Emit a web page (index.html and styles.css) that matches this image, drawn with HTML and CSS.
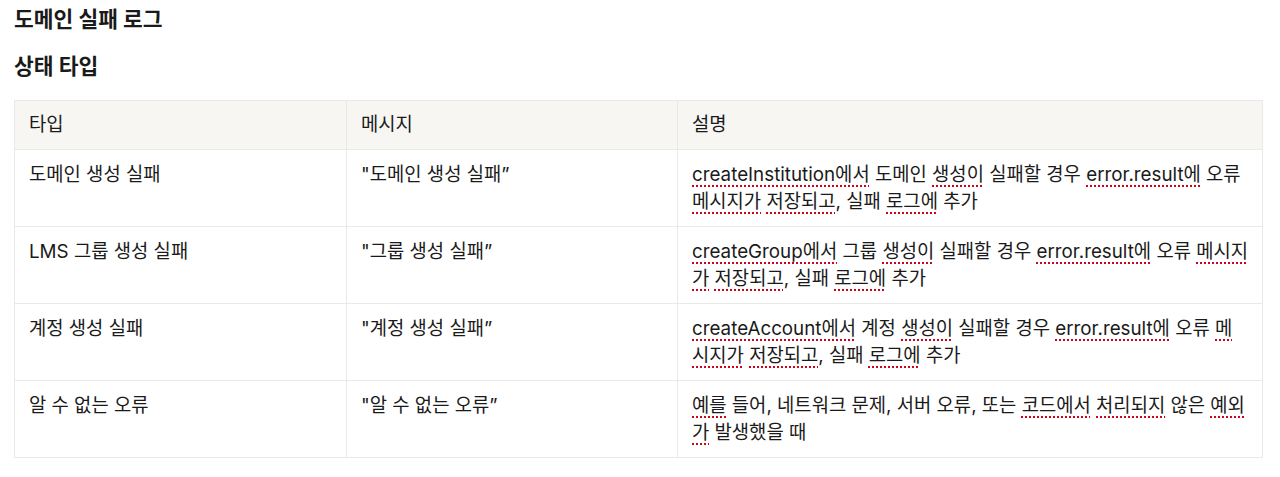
FILE: index.html
```html
<!DOCTYPE html>
<html lang="ko">
<head>
<meta charset="utf-8">
<title>도메인 실패 로그</title>
<link rel="stylesheet" href="styles.css">
</head>
<body>
<main class="page">
  <h1 class="title">도메인 실패 로그</h1>
  <h2 class="subtitle">상태 타입</h2>
  <table class="log-table">
    <colgroup>
      <col class="c-type">
      <col class="c-msg">
      <col class="c-desc">
    </colgroup>
    <thead>
      <tr><th>타입</th><th>메시지</th><th>설명</th></tr>
    </thead>
    <tbody>
      <tr>
        <td>도메인 생성 실패</td>
        <td>"도메인 생성 실패”</td>
        <td class="desc"><span class="sp">createInstitution에서</span> 도메인 <span class="sp">생성이</span> 실패할 경우 <span class="sp">error.result에</span> 오류 <span class="sp">메시지가</span> <span class="sp">저장되고</span>, 실패 <span class="sp">로그에</span> 추가</td>
      </tr>
      <tr>
        <td>LMS 그룹 생성 실패</td>
        <td>"그룹 생성 실패”</td>
        <td class="desc"><span class="sp">createGroup에서</span> 그룹 <span class="sp">생성이</span> 실패할 경우 <span class="sp">error.result에</span> 오류 <span class="sp">메시지가</span> <span class="sp">저장되고</span>, 실패 <span class="sp">로그에</span> 추가</td>
      </tr>
      <tr>
        <td>계정 생성 실패</td>
        <td>"계정 생성 실패”</td>
        <td class="desc"><span class="sp">createAccount에서</span> 계정 <span class="sp">생성이</span> 실패할 경우 <span class="sp">error.result에</span> 오류 <span class="sp">메시지가</span> <span class="sp">저장되고</span>, 실패 <span class="sp">로그에</span> 추가</td>
      </tr>
      <tr>
        <td>알 수 없는 오류</td>
        <td>"알 수 없는 오류”</td>
        <td class="desc"><span class="sp">예를</span> 들어, 네트워크 문제, 서버 오류, 또는 <span class="sp">코드에서</span> <span class="sp">처리되지</span> 않은 <span class="sp">예외가</span> 발생했을 때</td>
      </tr>
    </tbody>
  </table>
</main>
</body>
</html>
```

FILE: styles.css
```css
* { box-sizing: border-box; }

html, body {
  margin: 0;
  padding: 0;
  background: #ffffff;
}

body {
  font-family: Inter, "Noto Sans CJK KR", "Noto Sans", sans-serif;
  color: #1a1a1a;
}

.page {
  padding: 5px 14px 0 14px;
}

.title {
  margin: 0;
  font-size: 21.5px;
  line-height: 28px;
  font-weight: 700;
}

.subtitle {
  margin: 19px 0 20px 0;
  font-size: 21.5px;
  line-height: 28px;
  font-weight: 700;
}

.log-table {
  width: 1248px;
  table-layout: fixed;
  border-collapse: collapse;
  font-size: 18.8px;
  line-height: 27px;
}

.c-type { width: 332px; }
.c-msg { width: 331px; }
.c-desc { width: 585px; }

.log-table th,
.log-table td {
  border: 1px solid #e9e9e7;
  padding: 11px 14px;
  text-align: left;
  vertical-align: top;
  font-weight: 400;
}

.log-table td.desc {
  padding-right: 13px;
}

.log-table th {
  background: #f7f6f3;
  padding: 10px 14px 11px 14px;
}

.sp {
  text-decoration: underline dotted #d0021b;
  text-decoration-thickness: 2px;
  text-underline-offset: 4px;
}
```
